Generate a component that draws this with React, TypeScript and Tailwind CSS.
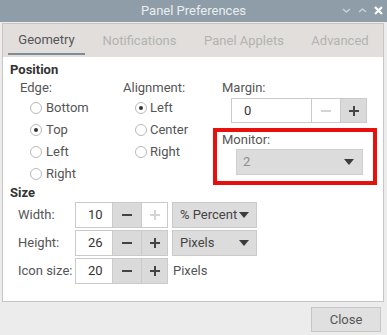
const Radio = ({ checked }: { checked?: boolean }) => (
  <span className="w-[12px] h-[12px] rounded-full border border-[#b8b8b8] bg-white flex items-center justify-center shrink-0">
    {checked && <span className="w-[4px] h-[4px] rounded-full bg-[#333]" />}
  </span>
);

const Minus = ({ off }: { off?: boolean }) => (
  <svg width="10" height="10" viewBox="0 0 10 10">
    <rect x="0" y="4" width="10" height="2" fill={off ? "#d4d4d4" : "#444"} />
  </svg>
);

const Plus = ({ off }: { off?: boolean }) => (
  <svg width="10" height="10" viewBox="0 0 10 10">
    <rect x="0" y="4" width="10" height="2" fill={off ? "#d4d4d4" : "#444"} />
    <rect x="4" y="0" width="2" height="10" fill={off ? "#d4d4d4" : "#444"} />
  </svg>
);

const Arrow = () => (
  <svg width="10" height="6" viewBox="0 0 10 6">
    <path d="M0 0 L10 0 L5 6 Z" fill="#3c3c3c" />
  </svg>
);

const Spin = ({
  value,
  entry,
  minusOff,
  plusOff,
}: {
  value: string;
  entry: string;
  minusOff?: boolean;
  plusOff?: boolean;
}) => (
  <div className="flex h-full">
    <div className={`${entry} border border-[#cacaca] bg-white pl-[12px] flex items-center text-[#333]`}>
      {value}
    </div>
    <div
      className={`w-[28px] border-y border-[#cacaca] flex items-center justify-center ${
        minusOff ? "bg-white" : "bg-[#dadada]"
      }`}
    >
      <Minus off={minusOff} />
    </div>
    <div
      className={`w-[27px] border border-[#cacaca] flex items-center justify-center ${
        plusOff ? "bg-white" : "bg-[#dadada]"
      }`}
    >
      <Plus off={plusOff} />
    </div>
  </div>
);

const Combo = ({ label }: { label: string }) => (
  <div className="w-[85px] h-full ml-[4px] bg-[#dcdcdc] border border-[#cacaca] flex items-center justify-between pl-[7px] pr-[7px] text-[#444] whitespace-nowrap">
    <span>{label}</span>
    <Arrow />
  </div>
);

export default function App() {
  return (
    <div
      className="w-[387px] h-[335px] bg-[#ececec] flex flex-col text-[13px] leading-[16px] text-[#555] overflow-hidden whitespace-nowrap"
      style={{ fontFamily: "Roboto, 'Liberation Sans', sans-serif" }}
    >
      {/* title bar */}
      <div className="h-[22px] bg-[#8e9da8] flex items-center relative shrink-0">
        <div className="flex-1 text-center text-[#e9edf0] text-[13px]">Panel Preferences</div>
        <div className="absolute right-[4px] top-[6px] flex items-center gap-[7px]">
          <svg width="9" height="9" viewBox="0 0 9 9">
            <path d="M1 3 L4.5 6 L8 3" stroke="#c9d1d7" strokeWidth="1.5" fill="none" />
          </svg>
          <svg width="9" height="9" viewBox="0 0 9 9">
            <path d="M1 6 L4.5 3 L8 6" stroke="#c9d1d7" strokeWidth="1.5" fill="none" />
          </svg>
          <svg width="9" height="9" viewBox="0 0 9 9">
            <path d="M1 1 L8 8 M8 1 L1 8" stroke="#ffffff" strokeWidth="2.2" fill="none" />
          </svg>
        </div>
      </div>

      {/* notebook */}
      <div className="mt-[1px] ml-[2px] mr-[3px] h-[279px] border border-[#c6c6c6] flex flex-col shrink-0">
        <div className="h-[33px] bg-[#e1dedb] flex items-start pl-[5px] gap-[7px] shrink-0">
          <div className="w-[77px] h-[31px] pt-[3px] border-b-[2px] border-[#7f8c96] flex items-center justify-center text-[#555]">
            Geometry
          </div>
          <div className="w-[95px] h-[31px] pt-[3px] flex items-center justify-center text-[#b3b3b3]">
            Notifications
          </div>
          <div className="w-[100px] h-[31px] pt-[3px] flex items-center justify-center text-[#b3b3b3]">
            Panel Applets
          </div>
          <div className="w-[78px] h-[31px] pt-[3px] flex items-center justify-center text-[#b3b3b3]">
            Advanced
          </div>
        </div>

        <div className="flex-1 bg-white pl-[7px] pt-[5px]">
          <div className="font-bold text-[#333]">Position</div>
          <div className="flex items-start">
            <div className="ml-[10px] w-[103px]">
              <div className="mt-[2px]">Edge:</div>
              <div className="mt-[1px] flex flex-col">
                {[
                  ["Bottom", false],
                  ["Top", true],
                  ["Left", false],
                  ["Right", false],
                ].map(([l, c]) => (
                  <div key={l as string} className="h-[22px] flex items-center pl-[10px] gap-[4px]">
                    <Radio checked={c as boolean} />
                    <span>{l as string}</span>
                  </div>
                ))}
              </div>
            </div>
            <div className="w-[90px]">
              <div className="mt-[2px]">Alignment:</div>
              <div className="mt-[1px] flex flex-col">
                {[
                  ["Left", true],
                  ["Center", false],
                  ["Right", false],
                ].map(([l, c]) => (
                  <div key={l as string} className="h-[22px] flex items-center pl-[12px] gap-[3px]">
                    <Radio checked={c as boolean} />
                    <span>{l as string}</span>
                  </div>
                ))}
              </div>
            </div>
            <div className="w-[164px]">
              <div className="mt-[2px] pl-[9px]">Margin:</div>
              <div className="mt-[2px] ml-[18px] h-[25px]">
                <Spin value="0" entry="w-[81px]" minusOff />
              </div>
              <div className="mt-[5px] h-[57px] border-[4px] border-[#e8100c]">
                <div className="pl-[5px]">Monitor:</div>
                <div className="mt-[1px] ml-[19px] w-[127px] h-[26px] bg-[#dcdcdc] border border-[#cfcfcf] flex items-center justify-between pl-[6px] pr-[8px] text-[#8c8c8c]">
                  <span>2</span>
                  <Arrow />
                </div>
              </div>
            </div>
          </div>

          <div className="font-bold text-[#333]">Size</div>
          <div className="mt-[1px] flex flex-col gap-[2px]">
            <div className="h-[26px] flex items-center pl-[8px]">
              <div className="w-[57px]">Width:</div>
              <Spin value="10" entry="w-[38px]" plusOff />
              <Combo label="% Percent" />
            </div>
            <div className="h-[26px] flex items-center pl-[8px]">
              <div className="w-[57px]">Height:</div>
              <Spin value="26" entry="w-[38px]" />
              <Combo label="Pixels" />
            </div>
            <div className="h-[26px] flex items-center pl-[8px]">
              <div className="w-[57px]">Icon size:</div>
              <Spin value="20" entry="w-[38px]" />
              <span className="ml-[5px]">Pixels</span>
            </div>
          </div>
        </div>
      </div>

      {/* action area */}
      <div className="flex justify-end pr-[6px] mt-[5px]">
        <button className="w-[70px] h-[25px] bg-[#e0e0e0] border border-[#c6c6c6] text-[#555] flex items-center justify-center">
          Close
        </button>
      </div>
    </div>
  );
}
